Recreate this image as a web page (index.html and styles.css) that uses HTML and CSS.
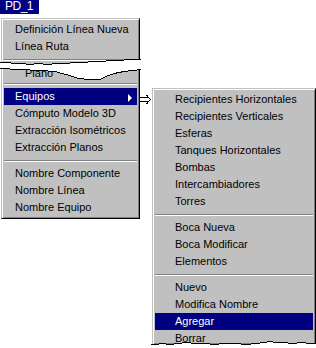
FILE: index.html
```html
<!DOCTYPE html>
<html>
<head>
    <title>PD_1 - Equipos</title>
    <link rel="stylesheet" href="styles.css">
</head>
<body>
    <div class="screen">
        <div class="title">PD_1</div>
        <div class="menus">
            <div class="menu main">
                <div class="item">Definición Línea Nueva</div>
                <div class="item">Línea Ruta</div>
                <div class="sep"></div>
                <div class="torn">Plano</div>
                <div class="sep"></div>
                <div class="item active">Equipos<span class="arrow"></span></div>
                <div class="item">Cómputo Modelo 3D</div>
                <div class="item">Extracción Isométricos</div>
                <div class="item">Extracción Planos</div>
                <div class="sep"></div>
                <div class="item">Nombre Componente</div>
                <div class="item">Nombre Línea</div>
                <div class="item">Nombre Equipo</div>

                <!-- torn strip: part of the menu was cut out of the picture -->
                <svg class="tear tear-band" width="141" height="23" viewBox="0 0 141 23" shape-rendering="crispEdges">
                    <polygon fill="#fff" points="0,5 8,5 14,6 22,6 30,7 38,6 48,7 56,6 66,6 74,5 84,5 92,4 102,4 110,3 120,3 128,2 141,2 141,12 124,14 114,16 106,19 100,22 90,22 78,21 70,18 62,16 55,14 40,13 20,12 0,11"/>
                    <polyline fill="none" stroke="#000" points="0,5.5 8,5.5 14,6.5 22,6.5 30,7.5 38,6.5 48,7.5 56,6.5 66,6.5 74,5.5 84,5.5 92,4.5 102,4.5 110,3.5 120,3.5 128,2.5 141,2.5"/>
                    <polyline fill="none" stroke="#000" points="0,11.5 20,12.5 40,13.5 55,14.5 62,16.5 70,18.5 78,21.5 90,22.5 100,22.5 106,19.5 114,16.5 124,14.5 141,12.5"/>
                </svg>
            </div>

            <svg class="pointer" width="12" height="10" viewBox="0 0 12 10" shape-rendering="crispEdges">
                <path d="M0 3.5H8M0 7.5H8M6.5 1L10.5 5.5L6.5 10" fill="none" stroke="#000"/>
            </svg>

            <div class="menu sub">
                <div class="items">
                    <div class="item">Recipientes Horizontales</div>
                    <div class="item">Recipientes Verticales</div>
                    <div class="item">Esferas</div>
                    <div class="item">Tanques Horizontales</div>
                    <div class="item">Bombas</div>
                    <div class="item">Intercambiadores</div>
                    <div class="item">Torres</div>
                    <div class="sep"></div>
                    <div class="item">Boca Nueva</div>
                    <div class="item">Boca Modificar</div>
                    <div class="item">Elementos</div>
                    <div class="sep"></div>
                    <div class="item">Nuevo</div>
                    <div class="item">Modifica Nombre</div>
                    <div class="item active">Agregar</div>
                    <div class="item">Borrar</div>
                </div>
                <svg class="tear tear-bottom" width="165" height="10" viewBox="0 0 165 10" shape-rendering="crispEdges">
                    <polygon fill="#fff" points="0,6 5,6 11,5 19,6 27,5 35,4 45,5 55,5 63,6 73,5 85,5 95,6 105,5 113,4 119,3 125,4 133,4 141,5 151,4 159,5 165,5 165,10 0,10"/>
                    <polyline fill="none" stroke="#000" points="0,6.5 5,6.5 11,5.5 19,6.5 27,5.5 35,4.5 45,5.5 55,5.5 63,6.5 73,5.5 85,5.5 95,6.5 105,5.5 113,4.5 119,3.5 125,4.5 133,4.5 141,5.5 151,4.5 159,5.5 165,5.5"/>
                </svg>
            </div>
        </div>
    </div>
</body>
</html>
```

FILE: styles.css
```css
body {
    margin: 0;
    background: #fff;
    font-family: "Liberation Sans", Arial, sans-serif;
    font-size: 11px;
    color: #000;
}
.screen {
    width: 316px;
    height: 348px;
    overflow: hidden;
}
.title {
    width: 39px;
    height: 14px;
    box-sizing: border-box;
    padding-left: 5px;
    background: #000080;
    color: #fff;
    font-size: 12px;
    line-height: 13px;
    letter-spacing: -0.5px;
}
.menus {
    display: flex;
    align-items: flex-start;
    margin-top: 4px;
    padding-left: 1px;
}
.menu {
    position: relative;
    flex: none;
    box-sizing: border-box;
    padding: 2px;
    background: #c0c0c0;
    border: 1px solid;
    border-color: #c0c0c0 #000 #000 #c0c0c0;
    box-shadow: inset 1px 1px #fff, inset -1px -1px #808080;
}
.main {
    width: 139px;
}
.sub {
    width: 164px;
    height: 256px;
    margin-top: 70px;
    padding-bottom: 0;
    border-bottom: 0;
}
.items {
    height: 100%;
    overflow: hidden;
}
.item {
    display: flex;
    align-items: center;
    height: 17px;
    line-height: 17px;
    padding-left: 11px;
    white-space: nowrap;
}
.sub .item {
    padding-left: 20px;
}
.item.active {
    background: #000080;
    color: #fff;
}
.arrow {
    width: 0;
    height: 0;
    margin: 2px 5px 0 auto;
    border-left: 4px solid #fff;
    border-top: 4px solid transparent;
    border-bottom: 4px solid transparent;
}
.sep {
    padding: 4px 0 3px;
}
.sep::before {
    content: "";
    display: block;
    border-top: 1px solid #808080;
    border-bottom: 1px solid #fff;
}
.torn {
    height: 15px;
    line-height: 19px;
    padding-left: 21px;
    overflow: hidden;
}
.tear {
    position: absolute;
    display: block;
}
.tear-band {
    left: -2px;
    top: 38px;
}
.tear-bottom {
    left: -2px;
    top: 249px;
}
.pointer {
    flex: none;
    display: block;
    margin-top: 76px;
}
```
